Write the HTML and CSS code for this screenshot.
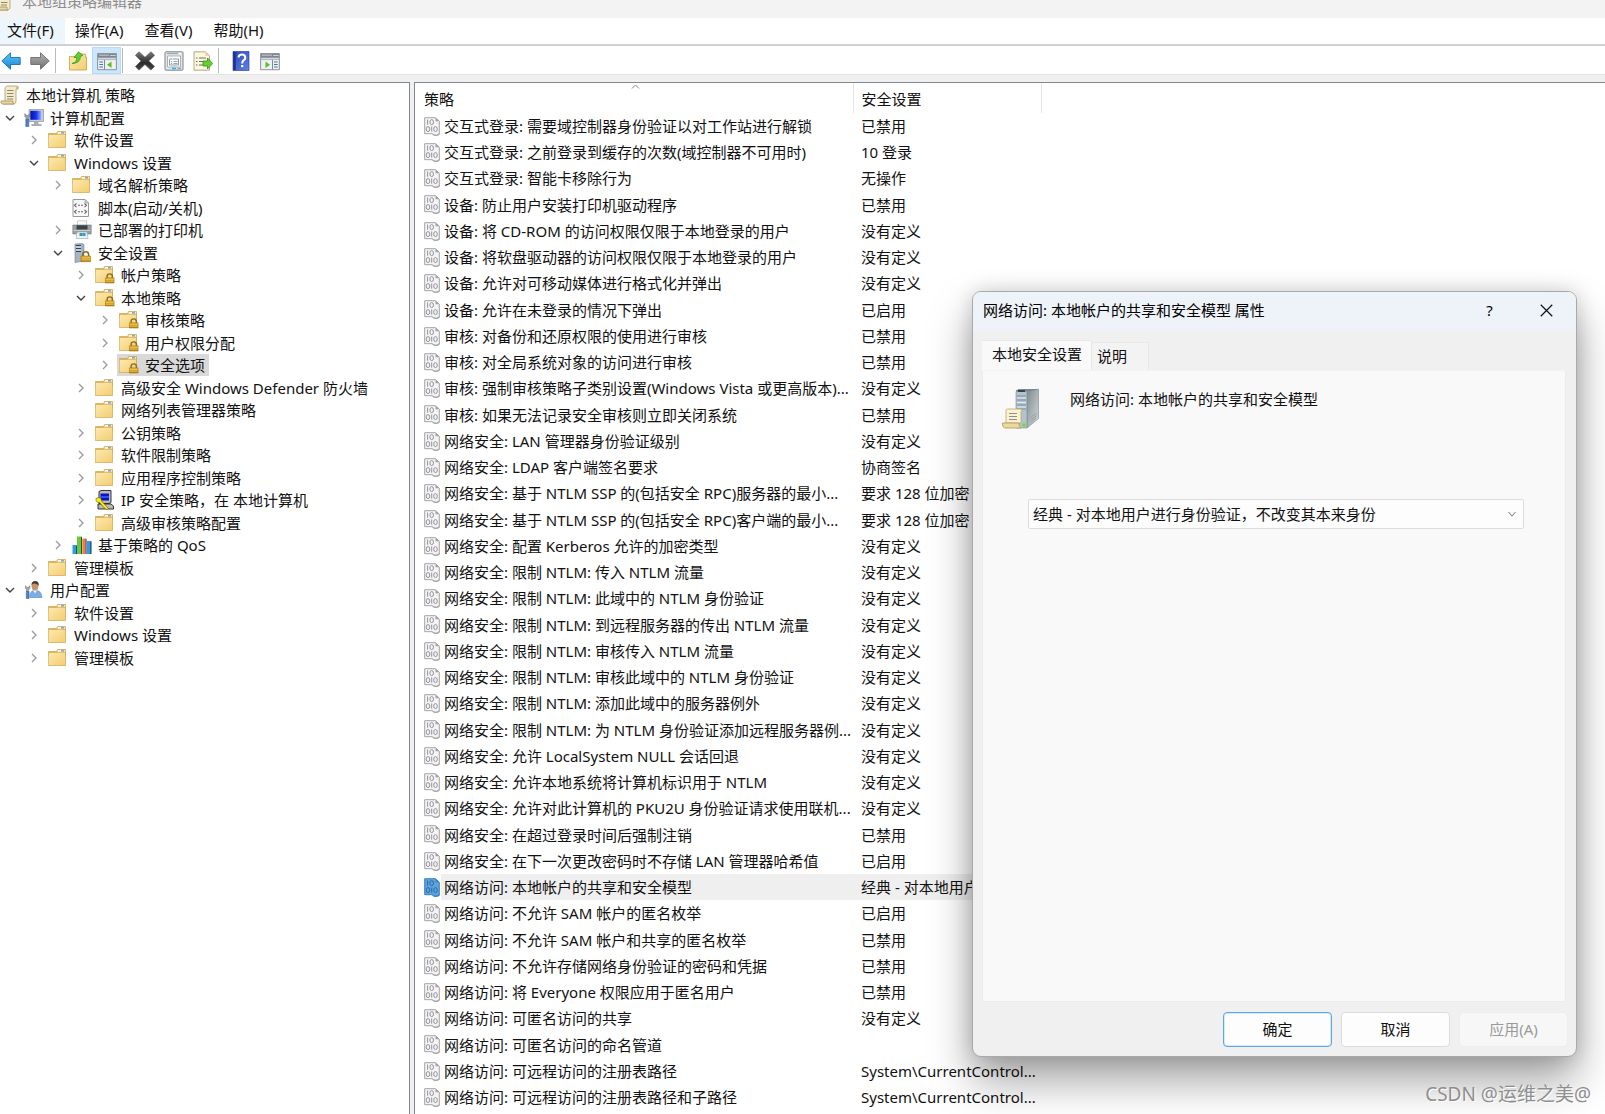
FILE: index.html
```html
<!DOCTYPE html>
<html lang="zh-CN">
<head>
<meta charset="utf-8">
<meta name="viewport" content="width=device-width, initial-scale=1">
<title>本地组策略编辑器</title>
<link rel="stylesheet" href="styles.css">
</head>
<body>
<svg class="sprite" aria-hidden="true">
  <defs>
    <linearGradient id="g-folder" x1="0" y1="0" x2="1" y2="1"><stop offset="0" stop-color="#fdeab0"/><stop offset="1" stop-color="#f3cd72"/></linearGradient>
    <linearGradient id="g-blue" x1="0" y1="0" x2="0" y2="1"><stop offset="0" stop-color="#5cc8fb"/><stop offset="1" stop-color="#1583d6"/></linearGradient>
    <linearGradient id="g-grey" x1="0" y1="0" x2="0" y2="1"><stop offset="0" stop-color="#b5b5b5"/><stop offset="1" stop-color="#6d6d6d"/></linearGradient>
    <linearGradient id="g-dark" x1="0" y1="0" x2="0" y2="1"><stop offset="0" stop-color="#7a7a7a"/><stop offset=".6" stop-color="#2b2b2b"/><stop offset="1" stop-color="#4a4a4a"/></linearGradient>
    <linearGradient id="g-help" x1="0" y1="0" x2="1" y2="1"><stop offset="0" stop-color="#2b45b4"/><stop offset="1" stop-color="#5f83e6"/></linearGradient>
    <linearGradient id="g-lock" x1="0" y1="0" x2="0" y2="1"><stop offset="0" stop-color="#e9b93a"/><stop offset="1" stop-color="#b97d08"/></linearGradient>
    <linearGradient id="g-side" x1="0" y1="0" x2="1" y2="1"><stop offset="0" stop-color="#7f8b8d"/><stop offset="1" stop-color="#d3dadb"/></linearGradient>
    <linearGradient id="g-screen" x1="0" y1="0" x2="1" y2="0"><stop offset="0" stop-color="#0510a8"/><stop offset=".55" stop-color="#1a35ee"/><stop offset="1" stop-color="#8fb0ff"/></linearGradient>
  </defs>
  <symbol id="i-closed" viewBox="0 0 10 10"><path d="M3 1l4 4-4 4" fill="none" stroke="#9a9a9a" stroke-width="1.3"/></symbol>
  <symbol id="i-open" viewBox="0 0 10 10"><path d="M1 3l4 4 4-4" fill="none" stroke="#404040" stroke-width="1.4"/></symbol>
  <symbol id="i-scroll" viewBox="0 0 20 20">
    <path d="M5 2.500Q6 1 8 1h9.500q1.500 1 .5 3h-2v12q0 2.500-2 3H3V17H5z" fill="#f4ebc8" stroke="#a99a6c" stroke-width=".8"/>
    <path d="M1 16h12q-.5 2 1 3H2.500Q.5 18.500 1 16z" fill="#ead9a0" stroke="#a08f5c" stroke-width=".8"/>
    <path d="M16 4V2.500Q16.500 1 18 2v2z" fill="#cdb983"/>
    <path d="M7 5.500h6.500M7 8.500h6.500M7 11.500h6.500M7 14h6" stroke="#8b8878" stroke-width="1"/>
  </symbol>
  <symbol id="i-folder" viewBox="1 0 20 20">
    <path d="M1.500 3.500h8l1-2h8V8h-17z" fill="#ecc569" stroke="#cba24c" stroke-width=".7"/>
    <path d="M10.800 2h7v2h-7z" fill="#fff6d6"/><path d="M14 2.200h3v1.300h-3z" fill="#4b9fe6"/>
    <path d="M1.300 4.500h8.200l1-.2h8v13.200H1.300z" fill="url(#g-folder)" stroke="#d0a54e" stroke-width=".7"/>
  </symbol>
  <symbol id="i-padlock" viewBox="0 0 12 12">
    <path d="M3 6V3.800Q3 1 6 1t3 2.800V6" fill="none" stroke="#8e6b1c" stroke-width="1.700"/>
    <path d="M1 5.500h10V11.500H1z" fill="url(#g-lock)" stroke="#8d6207" stroke-width=".5"/><path d="M1.500 7.500h9M1.500 9.500h9" stroke="#f7da7c" stroke-width=".6"/>
  </symbol>
  <symbol id="i-locked" viewBox="0 0 20 20"><use href="#i-folder" x="0" y="0" width="20" height="20"/><use href="#i-padlock" x="9.500" y="7.500" width="10.500" height="11.500"/></symbol>
  <symbol id="i-computer" viewBox="0 0 20 20">
    <path d="M5 1.500h14.500v12H5z" fill="#c9ccd2" stroke="#8d929b" stroke-width=".7"/><path d="M6.300 2.800h10.900v9H6.300z" fill="url(#g-screen)"/>
    <path d="M10 13.500h4.500V16h3v2h-10v-2H10z" fill="#a9aeb5"/>
    <path d="M.8 5.500v3l1.200 1v2h2.400v-2l1.300-1v-3l-1.300 1.800H2.200z" fill="#9aa2ab" stroke="#65707a" stroke-width=".5"/><path d="M1.800 11.500h3v7h-3z" fill="#4f82c8" stroke="#28538f" stroke-width=".5"/>
  </symbol>
  <symbol id="i-user" viewBox="0 0 20 20">
    <path d="M6 17.500Q5.500 10.500 11 10.200q6.500 0 7 7.300z" fill="#79aee3" stroke="#5588bd" stroke-width=".6"/><path d="M9 10l2 3.500L13.200 10z" fill="#eef4fa"/>
    <ellipse cx="11" cy="6.300" rx="3.300" ry="4.300" fill="#c79468"/><path d="M7.500 5.500Q7.200 1 11.200 1t3.500 5q-1.500-2.500-4-2.500t-3.200 2z" fill="#4a3c33"/>
    <path d="M1.500 5.500v3l1 1v2h2.200v-2l1.200-1v-3L4.700 7.300H2.500z" fill="#a2a8af" stroke="#68727b" stroke-width=".5"/><path d="M2.300 11.500h2.800v7H2.300z" fill="#4f82c8" stroke="#28538f" stroke-width=".5"/>
  </symbol>
  <symbol id="i-script" viewBox="1 0 20 20">
    <path d="M2 1.500h12l3.500 3.500v13.500H2z" fill="#f8f8f8" stroke="#989898" stroke-width="1"/><path d="M14 1.500V5h3.500z" fill="#cfcfcf" stroke="#989898" stroke-width=".6"/>
    <path d="M5.500 5.500l-2 1.800 2 1.800M13.500 5.500l2 1.800-2 1.800M7 7.300h2M10 7.300h2M5.500 12l-2 1.800 2 1.800M13.500 12l2 1.800-2 1.800M7 13.800h2M10 13.800h2" fill="none" stroke="#666" stroke-width="1.100"/>
  </symbol>
  <symbol id="i-printer" viewBox="0 0 20 20">
    <path d="M5.500.8h9v5h-9z" fill="#fafafa" stroke="#a8adb0" stroke-width=".6"/><path d="M.8 5h18.400v9H.8z" fill="#9a9fa4" stroke="#73797e" stroke-width=".6"/>
    <path d="M4.500 5.300h11v4.200h-11z" fill="#3d4246"/><path d="M1.500 10.500h17" stroke="#c8cccf"/><path d="M5 12h10l1 6.500H4z" fill="#e8f1f6" stroke="#9ba7ae" stroke-width=".6"/><path d="M7.500 13h3v3h-3z" fill="#2aa38f"/><path d="M10.500 13h3v3h-3z" fill="#3c96d8"/>
  </symbol>
  <symbol id="i-secserver" viewBox="0 0 20 20">
    <path d="M3 1l7-.5 2 1V18l-9 1.500z" fill="#a4b4c3" stroke="#74838f" stroke-width=".6"/><path d="M4 2.500h5M4 5.500h5M4 8.500h5" stroke="#36424c" stroke-width="1.200"/><path d="M4 4h5M4 7h5" stroke="#dfe8ee" stroke-width="1"/>
    <use href="#i-padlock" x="8" y="7.500" width="11.500" height="12"/>
  </symbol>
  <symbol id="i-ipsec" viewBox="0 0 20 20">
    <path d="M4 1.500l2-1h10v12l-2 1H4z" fill="#b9b9b9" stroke="#222" stroke-width=".9"/><path d="M5.500 3.500h8.500v7H5.500z" fill="#0713c9"/><path d="M5.500 7h8.500" stroke="#3f63ff" stroke-width="1.500"/>
    <path d="M3 14h13l2.500 2v3H3z" fill="#b9b9b9" stroke="#222" stroke-width=".9"/>
    <path d="M1 8.500Q3.500 6.500 6 8.500l.5 2.500 7 7.500-2 1-2-1.500-5-5.500Q.5 12.500 1 8.500z" fill="#fbf000" stroke="#5e5900" stroke-width=".6"/>
  </symbol>
  <symbol id="i-qos" viewBox="1 0 20 20">
    <path d="M1.500 10h3.500v9H1.500z" fill="#2e9ce6"/><path d="M5 10l.9.500v8.500H5z" fill="#063a63"/><path d="M6 1.500h4V19H6z" fill="#6cc644"/><path d="M10 1.500l1 .5v17h-1z" fill="#1c5e0f"/>
    <path d="M11.300 3.500h3.200V19h-3.200z" fill="#f47c4c"/><path d="M14.500 3.500l1 .5v15h-1z" fill="#5c1d08"/><path d="M15.700 6h3.500V19h-3.500z" fill="#2e9ce6"/><path d="M19.200 6l1.300.5V19h-1.300z" fill="#063a63"/>
  </symbol>
  <symbol id="i-policy" viewBox="0 0 16 19">
    <path class="sheet" d="M.7.700h10.800l3.800 3.500v13l-2.300 1H10l-2-1.500H.7z"/><path class="fold" d="M11.500.7v3.500h3.800z"/>
    <g class="bits"><path d="M3.600 2.500v5.200M7.700 9.500v5.200"/><ellipse cx="7.700" cy="5.100" rx="1.800" ry="2.500"/><ellipse cx="4" cy="12.100" rx="1.800" ry="2.500"/><ellipse cx="11.500" cy="12.100" rx="1.800" ry="2.500"/></g>
    <path class="curl" d="M7.500 16l3 1.700h2.500l2.300-1.700v2L13 18.800h-3z"/>
  </symbol>
  <symbol id="i-back" viewBox="0 0 20 20"><path d="M.8 10L9.500 1.800v4.700h9.700v7H9.500v4.700z" fill="url(#g-blue)" stroke="#1c6eb0" stroke-width=".9"/></symbol>
  <symbol id="i-forward" viewBox="0 0 20 20"><path d="M19.200 10L10.500 1.800v4.700H.8v7h9.700v4.700z" fill="url(#g-grey)" stroke="#6b6b6b" stroke-width=".9"/></symbol>
  <symbol id="i-up" viewBox="0 0 20 20">
    <path d="M1.500 5.500h7l1-2.500h8v3h1v13h-17z" fill="url(#g-folder)" stroke="#c99e45" stroke-width=".8"/>
    <path d="M4 12.500Q9 11.500 8.800 6.500H6L10.500.8 15 4.500l-2.600.8Q12.500 12.500 4 12.500z" fill="#5fd12c" stroke="#2f8f12" stroke-width=".7"/>
  </symbol>
  <symbol id="i-window" viewBox="0 0 20 20">
    <path d="M.6 2.500h18.800v16.200H.6z" fill="#eef0f3" stroke="#85898f" stroke-width=".9"/><path d="M1 3h18v3.800H1z" fill="#7f8792"/><path d="M2 4.200h10" stroke="#b9c0c9" stroke-width="1.200"/><path d="M13.500 4.500h1.200M15.500 4.500h1.200M17.400 4.500h1" stroke="#fff" stroke-width="1.200"/><path d="M1 8.300h18" stroke="#b4b9c0" stroke-width="1.500"/>
  </symbol>
  <symbol id="i-tree" viewBox="0 0 20 20"><use href="#i-window" width="20" height="20"/><path d="M7.500 9v9.500" stroke="#85898f"/><path d="M2.300 11h3.700M2.300 13.500h3.700M2.300 16h3.700" stroke="#3f79b8" stroke-width="1.200"/><path d="M14.500 10.500v6.500l-4.500-3.200z" fill="#4fc321"/></symbol>
  <symbol id="i-action" viewBox="0 0 20 20"><use href="#i-window" width="20" height="20"/><path d="M12.500 9v9.500" stroke="#85898f"/><path d="M14 11h3.700M14 13.500h3.700M14 16h3.700" stroke="#3f79b8" stroke-width="1.200"/><path d="M5.500 10.500v6.500l4.500-3.200z" fill="#4fc321"/></symbol>
  <symbol id="i-delete" viewBox="0 0 20 20"><path d="M4 .8l6 5.500 6-5.500 3.600 3.500-5.800 5.600 5.800 5.500-3.700 3.700-6-5.500L4 19.200.4 15.600 6 10 .4 4.300z" fill="url(#g-dark)" stroke="#555" stroke-width=".6"/></symbol>
  <symbol id="i-props" viewBox="0 0 20 20">
    <rect x="1" y=".8" width="18" height="18.400" rx="1" fill="#e3e7ec" stroke="#7e8389"/><path d="M3 2.500h11" stroke="#a0a7af" stroke-width="1.300"/><path d="M15 2.500h2.500" stroke="#fff" stroke-width="1.300"/>
    <path d="M3.500 5h13v11h-13z" fill="#fff" stroke="#9aa1a9" stroke-width=".8"/><path d="M5.500 8h3M5.500 8.500v5.500h9V8H9" fill="none" stroke="#8d96a1"/><path d="M7 10.500h1.200M9.500 10.500h4M7 12.500h1.200M9.500 12.500h4" stroke="#7888a0" stroke-width=".8"/><path d="M8 17.500h4" stroke="#1fbdf0" stroke-width="1.600"/><path d="M13.500 17.500h3.500" stroke="#909aa3" stroke-width="1.300"/>
  </symbol>
  <symbol id="i-export" viewBox="0 0 20 20">
    <path d="M1 .8h11.500l4 4v14.400H1z" fill="#fbf6dc" stroke="#aaa37d" stroke-width=".9"/><path d="M12.500.8v4h4z" fill="#d9d1a5"/><path d="M3 7h1.500M3 10.500h1.500M3 14h1.500M6 7h7M6 10.500h4M6 14h4" stroke="#6c6c74" stroke-width="1.200"/>
    <path d="M10 10h4.500V7l5.200 5.500-5.200 5.500v-3H10z" fill="#63d030" stroke="#319414" stroke-width=".8"/>
  </symbol>
  <symbol id="i-help" viewBox="0 0 20 20"><path d="M2 .5h16v19H2z" fill="url(#g-help)" stroke="#20348c" stroke-width=".6"/><path d="M2.300 1h2.500v18H2.300z" fill="#1d3190"/><path d="M7.500 6.500Q7.800 3.500 11 3.500t3.300 3.200q0 1.500-1.800 2.700-1.300 1-1.300 3" fill="none" stroke="#fff" stroke-width="2"/><path d="M10.100 14h2.200v2.200h-2.200z" fill="#fff"/></symbol>
  <symbol id="i-server" viewBox="0 0 40 42">
    <path d="M15 2.500L18 1h19.500v29.500L26 40H15z" fill="#9db0bb"/><path d="M26 4L37.500 1v29.500L26 40z" fill="url(#g-side)" stroke="#7f8b8d" stroke-width=".5"/><path d="M15 2.500L18 1h19.500L26 4H15z" fill="#7a8b90"/>
    <path d="M15 3.500h11V40H15z" fill="#b3c2cc" stroke="#7b8b95" stroke-width=".6"/><path d="M17 3h7" stroke="#37414a" stroke-width="2"/><path d="M16 8h9M16 12h9M16 17h9M16 21h9" stroke="#7c8f9d" stroke-width="1.200"/><path d="M16 10h9M16 14.500h9M16 19h9" stroke="#e5edf2" stroke-width="1.200"/>
    <path d="M30 29l6-4M30 31.500l6-4M30 34l5-4" stroke="#8d999b" stroke-width=".8"/>
    <path d="M5 22.500Q5 21 7 21h13q1.500 1 0 3v11H5z" fill="#fbf2d0" stroke="#bca66a" stroke-width=".8"/><path d="M1.500 35H18q-.5 3.500 2 5H3.500Q1 38.500 1.500 35z" fill="#ecd9a0" stroke="#b09858" stroke-width=".8"/><path d="M8 25.500h8M8 28.500h8M8 31.500h8" stroke="#8f8b98" stroke-width="1.200"/>
    <circle cx="23" cy="37" r="1.800" fill="#6be21c"/>
  </symbol>
  <symbol id="i-close" viewBox="0 0 14 14"><path d="M.8.8l12.400 12.400M13.200.8L.8 13.200" stroke="#111" stroke-width="1.300"/></symbol>
</svg>

<header class="titlebar"><svg class="ico"><use href="#i-scroll"/></svg><span>本地组策略编辑器</span></header>
<nav class="menubar" aria-label="菜单">
  <button class="menu active">文件(F)</button><button class="menu">操作(A)</button><button class="menu">查看(V)</button><button class="menu">帮助(H)</button>
</nav>
<div class="toolbar" role="toolbar">
  <button class="tool" aria-label="后退"><svg class="ico"><use href="#i-back"/></svg></button>
  <button class="tool" aria-label="前进"><svg class="ico"><use href="#i-forward"/></svg></button>
  <span class="sep"></span>
  <button class="tool" aria-label="上移"><svg class="ico"><use href="#i-up"/></svg></button>
  <button class="tool pressed" aria-label="控制台树"><svg class="ico"><use href="#i-tree"/></svg></button>
  <span class="sep"></span>
  <button class="tool" aria-label="删除"><svg class="ico"><use href="#i-delete"/></svg></button>
  <button class="tool" aria-label="属性"><svg class="ico"><use href="#i-props"/></svg></button>
  <button class="tool" aria-label="导出列表"><svg class="ico"><use href="#i-export"/></svg></button>
  <span class="sep"></span>
  <button class="tool" aria-label="帮助"><svg class="ico"><use href="#i-help"/></svg></button>
  <button class="tool" aria-label="操作窗格"><svg class="ico"><use href="#i-action"/></svg></button>
</div>

<main class="panes">
  <ul class="tree" role="tree">
    <li class="node root"><span class="item"><svg class="ico"><use href="#i-scroll"/></svg>本地计算机 策略</span></li>
    <li class="node l1"><svg class="chev"><use href="#i-open"/></svg><span class="item"><svg class="ico"><use href="#i-computer"/></svg>计算机配置</span></li>
    <li class="node l2"><svg class="chev"><use href="#i-closed"/></svg><span class="item"><svg class="ico"><use href="#i-folder"/></svg>软件设置</span></li>
    <li class="node l2"><svg class="chev"><use href="#i-open"/></svg><span class="item"><svg class="ico"><use href="#i-folder"/></svg>Windows 设置</span></li>
    <li class="node l3"><svg class="chev"><use href="#i-closed"/></svg><span class="item"><svg class="ico"><use href="#i-folder"/></svg>域名解析策略</span></li>
    <li class="node l3"><svg class="chev"></svg><span class="item"><svg class="ico"><use href="#i-script"/></svg>脚本(启动/关机)</span></li>
    <li class="node l3"><svg class="chev"><use href="#i-closed"/></svg><span class="item"><svg class="ico"><use href="#i-printer"/></svg>已部署的打印机</span></li>
    <li class="node l3"><svg class="chev"><use href="#i-open"/></svg><span class="item"><svg class="ico"><use href="#i-secserver"/></svg>安全设置</span></li>
    <li class="node l4"><svg class="chev"><use href="#i-closed"/></svg><span class="item"><svg class="ico"><use href="#i-locked"/></svg>帐户策略</span></li>
    <li class="node l4"><svg class="chev"><use href="#i-open"/></svg><span class="item"><svg class="ico"><use href="#i-locked"/></svg>本地策略</span></li>
    <li class="node l5"><svg class="chev"><use href="#i-closed"/></svg><span class="item"><svg class="ico"><use href="#i-locked"/></svg>审核策略</span></li>
    <li class="node l5"><svg class="chev"><use href="#i-closed"/></svg><span class="item"><svg class="ico"><use href="#i-locked"/></svg>用户权限分配</span></li>
    <li class="node l5"><svg class="chev"><use href="#i-closed"/></svg><span class="item selected"><svg class="ico"><use href="#i-locked"/></svg>安全选项</span></li>
    <li class="node l4"><svg class="chev"><use href="#i-closed"/></svg><span class="item"><svg class="ico"><use href="#i-folder"/></svg>高级安全 Windows Defender 防火墙</span></li>
    <li class="node l4"><svg class="chev"></svg><span class="item"><svg class="ico"><use href="#i-folder"/></svg>网络列表管理器策略</span></li>
    <li class="node l4"><svg class="chev"><use href="#i-closed"/></svg><span class="item"><svg class="ico"><use href="#i-folder"/></svg>公钥策略</span></li>
    <li class="node l4"><svg class="chev"><use href="#i-closed"/></svg><span class="item"><svg class="ico"><use href="#i-folder"/></svg>软件限制策略</span></li>
    <li class="node l4"><svg class="chev"><use href="#i-closed"/></svg><span class="item"><svg class="ico"><use href="#i-folder"/></svg>应用程序控制策略</span></li>
    <li class="node l4"><svg class="chev"><use href="#i-closed"/></svg><span class="item"><svg class="ico"><use href="#i-ipsec"/></svg>IP 安全策略，在 本地计算机</span></li>
    <li class="node l4"><svg class="chev"><use href="#i-closed"/></svg><span class="item"><svg class="ico"><use href="#i-folder"/></svg>高级审核策略配置</span></li>
    <li class="node l3"><svg class="chev"><use href="#i-closed"/></svg><span class="item"><svg class="ico"><use href="#i-qos"/></svg>基于策略的 QoS</span></li>
    <li class="node l2"><svg class="chev"><use href="#i-closed"/></svg><span class="item"><svg class="ico"><use href="#i-folder"/></svg>管理模板</span></li>
    <li class="node l1"><svg class="chev"><use href="#i-open"/></svg><span class="item"><svg class="ico"><use href="#i-user"/></svg>用户配置</span></li>
    <li class="node l2"><svg class="chev"><use href="#i-closed"/></svg><span class="item"><svg class="ico"><use href="#i-folder"/></svg>软件设置</span></li>
    <li class="node l2"><svg class="chev"><use href="#i-closed"/></svg><span class="item"><svg class="ico"><use href="#i-folder"/></svg>Windows 设置</span></li>
    <li class="node l2"><svg class="chev"><use href="#i-closed"/></svg><span class="item"><svg class="ico"><use href="#i-folder"/></svg>管理模板</span></li>
  </ul>

  <section class="list">
    <table class="policies">
      <colgroup><col class="c-icon"><col class="c-name"><col class="c-setting"><col></colgroup>
      <thead><tr><th colspan="2" class="h-name">策略<svg class="sort"><path d="M1 4.500l3.500-3.500L8 4.500" fill="none" stroke="#888"/></svg></th><th class="h-setting">安全设置</th><th></th></tr></thead>
      <tbody>
        <tr><td><svg class="pol"><use href="#i-policy"/></svg></td><td>交互式登录: 需要域控制器身份验证以对工作站进行解锁</td><td>已禁用</td><td></td></tr>
        <tr><td><svg class="pol"><use href="#i-policy"/></svg></td><td>交互式登录: 之前登录到缓存的次数(域控制器不可用时)</td><td>10 登录</td><td></td></tr>
        <tr><td><svg class="pol"><use href="#i-policy"/></svg></td><td>交互式登录: 智能卡移除行为</td><td>无操作</td><td></td></tr>
        <tr><td><svg class="pol"><use href="#i-policy"/></svg></td><td>设备: 防止用户安装打印机驱动程序</td><td>已禁用</td><td></td></tr>
        <tr><td><svg class="pol"><use href="#i-policy"/></svg></td><td>设备: 将 CD-ROM 的访问权限仅限于本地登录的用户</td><td>没有定义</td><td></td></tr>
        <tr><td><svg class="pol"><use href="#i-policy"/></svg></td><td>设备: 将软盘驱动器的访问权限仅限于本地登录的用户</td><td>没有定义</td><td></td></tr>
        <tr><td><svg class="pol"><use href="#i-policy"/></svg></td><td>设备: 允许对可移动媒体进行格式化并弹出</td><td>没有定义</td><td></td></tr>
        <tr><td><svg class="pol"><use href="#i-policy"/></svg></td><td>设备: 允许在未登录的情况下弹出</td><td>已启用</td><td></td></tr>
        <tr><td><svg class="pol"><use href="#i-policy"/></svg></td><td>审核: 对备份和还原权限的使用进行审核</td><td>已禁用</td><td></td></tr>
        <tr><td><svg class="pol"><use href="#i-policy"/></svg></td><td>审核: 对全局系统对象的访问进行审核</td><td>已禁用</td><td></td></tr>
        <tr><td><svg class="pol"><use href="#i-policy"/></svg></td><td>审核: 强制审核策略子类别设置(Windows Vista 或更高版本)...</td><td>没有定义</td><td></td></tr>
        <tr><td><svg class="pol"><use href="#i-policy"/></svg></td><td>审核: 如果无法记录安全审核则立即关闭系统</td><td>已禁用</td><td></td></tr>
        <tr><td><svg class="pol"><use href="#i-policy"/></svg></td><td>网络安全: LAN 管理器身份验证级别</td><td>没有定义</td><td></td></tr>
        <tr><td><svg class="pol"><use href="#i-policy"/></svg></td><td>网络安全: LDAP 客户端签名要求</td><td>协商签名</td><td></td></tr>
        <tr><td><svg class="pol"><use href="#i-policy"/></svg></td><td>网络安全: 基于 NTLM SSP 的(包括安全 RPC)服务器的最小...</td><td>要求 128 位加密</td><td></td></tr>
        <tr><td><svg class="pol"><use href="#i-policy"/></svg></td><td>网络安全: 基于 NTLM SSP 的(包括安全 RPC)客户端的最小...</td><td>要求 128 位加密</td><td></td></tr>
        <tr><td><svg class="pol"><use href="#i-policy"/></svg></td><td>网络安全: 配置 Kerberos 允许的加密类型</td><td>没有定义</td><td></td></tr>
        <tr><td><svg class="pol"><use href="#i-policy"/></svg></td><td>网络安全: 限制 NTLM: 传入 NTLM 流量</td><td>没有定义</td><td></td></tr>
        <tr><td><svg class="pol"><use href="#i-policy"/></svg></td><td>网络安全: 限制 NTLM: 此域中的 NTLM 身份验证</td><td>没有定义</td><td></td></tr>
        <tr><td><svg class="pol"><use href="#i-policy"/></svg></td><td>网络安全: 限制 NTLM: 到远程服务器的传出 NTLM 流量</td><td>没有定义</td><td></td></tr>
        <tr><td><svg class="pol"><use href="#i-policy"/></svg></td><td>网络安全: 限制 NTLM: 审核传入 NTLM 流量</td><td>没有定义</td><td></td></tr>
        <tr><td><svg class="pol"><use href="#i-policy"/></svg></td><td>网络安全: 限制 NTLM: 审核此域中的 NTLM 身份验证</td><td>没有定义</td><td></td></tr>
        <tr><td><svg class="pol"><use href="#i-policy"/></svg></td><td>网络安全: 限制 NTLM: 添加此域中的服务器例外</td><td>没有定义</td><td></td></tr>
        <tr><td><svg class="pol"><use href="#i-policy"/></svg></td><td>网络安全: 限制 NTLM: 为 NTLM 身份验证添加远程服务器例...</td><td>没有定义</td><td></td></tr>
        <tr><td><svg class="pol"><use href="#i-policy"/></svg></td><td>网络安全: 允许 LocalSystem NULL 会话回退</td><td>没有定义</td><td></td></tr>
        <tr><td><svg class="pol"><use href="#i-policy"/></svg></td><td>网络安全: 允许本地系统将计算机标识用于 NTLM</td><td>没有定义</td><td></td></tr>
        <tr><td><svg class="pol"><use href="#i-policy"/></svg></td><td>网络安全: 允许对此计算机的 PKU2U 身份验证请求使用联机...</td><td>没有定义</td><td></td></tr>
        <tr><td><svg class="pol"><use href="#i-policy"/></svg></td><td>网络安全: 在超过登录时间后强制注销</td><td>已禁用</td><td></td></tr>
        <tr><td><svg class="pol"><use href="#i-policy"/></svg></td><td>网络安全: 在下一次更改密码时不存储 LAN 管理器哈希值</td><td>已启用</td><td></td></tr>
        <tr class="selected"><td><svg class="pol"><use href="#i-policy"/></svg></td><td>网络访问: 本地帐户的共享和安全模型</td><td>经典 - 对本地用户进行身...</td><td></td></tr>
        <tr><td><svg class="pol"><use href="#i-policy"/></svg></td><td>网络访问: 不允许 SAM 帐户的匿名枚举</td><td>已启用</td><td></td></tr>
        <tr><td><svg class="pol"><use href="#i-policy"/></svg></td><td>网络访问: 不允许 SAM 帐户和共享的匿名枚举</td><td>已禁用</td><td></td></tr>
        <tr><td><svg class="pol"><use href="#i-policy"/></svg></td><td>网络访问: 不允许存储网络身份验证的密码和凭据</td><td>已禁用</td><td></td></tr>
        <tr><td><svg class="pol"><use href="#i-policy"/></svg></td><td>网络访问: 将 Everyone 权限应用于匿名用户</td><td>已禁用</td><td></td></tr>
        <tr><td><svg class="pol"><use href="#i-policy"/></svg></td><td>网络访问: 可匿名访问的共享</td><td>没有定义</td><td></td></tr>
        <tr><td><svg class="pol"><use href="#i-policy"/></svg></td><td>网络访问: 可匿名访问的命名管道</td><td></td><td></td></tr>
        <tr><td><svg class="pol"><use href="#i-policy"/></svg></td><td>网络访问: 可远程访问的注册表路径</td><td>System\CurrentControl...</td><td></td></tr>
        <tr><td><svg class="pol"><use href="#i-policy"/></svg></td><td>网络访问: 可远程访问的注册表路径和子路径</td><td>System\CurrentControl...</td><td></td></tr>
      </tbody>
    </table>
  </section>
</main>

<section class="dialog" role="dialog" aria-labelledby="dialog-title">
  <header class="dialog-head">
    <h1 id="dialog-title">网络访问: 本地帐户的共享和安全模型 属性</h1>
    <button class="caption" aria-label="帮助">?</button>
    <button class="caption" aria-label="关闭"><svg class="close"><use href="#i-close"/></svg></button>
  </header>
  <div class="tabs" role="tablist"><button class="tab current" role="tab" aria-selected="true">本地安全设置</button><button class="tab" role="tab">说明</button></div>
  <div class="page" role="tabpanel">
    <div class="subject"><svg class="server"><use href="#i-server"/></svg><label for="model">网络访问: 本地帐户的共享和安全模型</label></div>
    <div class="combo">
      <select id="model"><option>经典 - 对本地用户进行身份验证，不改变其本来身份</option></select>
      <svg class="drop" viewBox="0 0 10 10"><path d="M1.500 3l3.500 4 3.500-4" fill="none" stroke="#8a8a8a" stroke-width="1.100"/></svg>
    </div>
  </div>
  <footer class="actions"><button class="btn primary">确定</button><button class="btn">取消</button><button class="btn" disabled>应用(A)</button></footer>
</section>

<div class="watermark">CSDN @运维之美@</div>
</body>
</html>
```

FILE: styles.css
```css
* { box-sizing: border-box; }

body {
  margin: 0;
  min-height: 100vh;
  position: relative;
  display: flex;
  flex-direction: column;
  overflow: hidden;
  background: #f0f0f0;
  color: #111;
  font: 15px/22px "Noto Sans", "Noto Sans CJK SC", sans-serif;
}

button, select { font: inherit; color: inherit; margin: 0; padding: 0; border: 0; background: none; }
svg { display: block; flex: none; }
.sprite { position: absolute; width: 0; height: 0; }
.ico { width: 20px; height: 20px; }

.titlebar {
  display: flex;
  align-items: center;
  gap: 2px;
  height: 32px;
  margin-top: -14px;
  padding-bottom: 2px;
  background: #f3f3f3;
  color: #8c8c8c;
}
.titlebar .ico { margin-left: -6px; margin-right: 6px; }

.menubar { display: flex; height: 28px; background: #fff; border-bottom: 2px solid #cfd1d5; }
.menu { padding: 0 11px 2px 10px; }
.menu.active { padding-left: 7px; background: #eef6fd; }

.toolbar { display: flex; height: 29px; margin-bottom: 7px; padding-top: 1px; background: #fff; border-bottom: 1px solid #e4e4e4; }
.toolbar .tool:first-child { margin-left: -4px; }
.tool { width: 29px; display: flex; align-items: center; justify-content: center; }
.tool.pressed { background: #cce6fc; border: 1px solid #b5dafa; }
.sep { width: 1px; margin: 1px 7px 1px 1px; background: #b9b9b9; }

/* Two panes */
.panes { flex: 1; display: flex; gap: 4px; }
.tree {
  width: 410px;
  flex: none;
  margin: 0;
  padding: 1px 0 0;
  list-style: none;
  display: grid;
  grid-auto-rows: 22px 23px;
  align-content: start;
  background: #fff;
  border: solid #828790;
  border-width: 1px 1px 0 0;
}
.node { display: flex; align-items: center; white-space: nowrap; }
.chev { width: 10px; height: 10px; margin: 0 7px 0 5px; }
.item { display: flex; align-items: center; gap: 6px; height: 100%; padding: 0 4px 0 2px; }
.root .item { padding-left: 0; }
.item.selected { background: #d9d9d9; }
.l2 { padding-left: 24px; }
.l3 { padding-left: 48px; }
.l4 { padding-left: 71px; }
.l5 { padding-left: 95px; }

.list { flex: 1; min-width: 0; background: #fff; border: solid #828790; border-width: 1px 0 0 1px; }
.policies { width: 100%; table-layout: fixed; border-collapse: collapse; }
.c-icon { width: 26px; }
.c-name { width: 412px; }
.c-setting { width: 188px; }
.policies th { position: relative; height: 30px; padding: 1px 8px 0; font-weight: 400; text-align: left; }
.policies .h-name { padding-left: 9px; }
.h-name, .h-setting { border-right: 1px solid #e5e5e5; }
.sort { position: absolute; top: 1px; left: 216px; width: 9px; height: 6px; }
.policies td { height: 26px; padding: 0 0 0 3px; white-space: nowrap; overflow: hidden; }
.policies tbody tr:nth-child(4n) td { height: 27px; }
.policies td:first-child { padding-left: 9px; overflow: visible; }
.policies td:nth-child(3) { padding-left: 8px; }
.selected td:nth-child(2), .selected td:nth-child(3) { background: #efefef; }

.pol { width: 16px; height: 19px; --sheet: #f4f4f4; --line: #a3a3a3; --bits: #95929f; }
.selected .pol { --sheet: #5ba3dc; --line: #3c83bd; --bits: #2a6ca6; }
.sheet { fill: var(--sheet); stroke: var(--line); stroke-width: 1; }
.fold, .curl { fill: var(--line); }
.bits { fill: none; stroke: var(--bits); stroke-width: 1; }

/* Floating property sheet */
.dialog {
  position: absolute;
  top: 291px;
  right: 28px;
  width: 605px;
  display: flex;
  flex-direction: column;
  background: #f0f0f0;
  border: 1px solid #a9a9a9;
  border-radius: 9px;
  box-shadow: 0 24px 44px rgba(0, 0, 0, .36), 0 0 20px rgba(0, 0, 0, .16);
}
.dialog-head { display: flex; align-items: center; height: 39px; padding: 0 1px 3px 10px; background: #eef3f9; border-radius: 8px 8px 0 0; color: #000; }
.dialog-head h1 { flex: 1; margin: 0; font-size: 15px; font-weight: 400; }
.caption { width: 57px; height: 36px; display: flex; align-items: center; justify-content: center; }
.close { width: 13px; height: 13px; }

.tabs { display: flex; align-items: flex-end; margin: 9px 0 0 9px; }
.tab { height: 28px; width: 57px; padding: 0 0 2px 5px; text-align: left; background: #f3f3f3; border: solid #e8e8e8; border-width: 1px 1px 0 0; }
.tab.current { height: 30px; width: 110px; padding: 0 0 4px 10px; background: #f9f9f9; }

.page { min-height: 632px; margin: 0 10px 0 9px; padding: 17px 41px 0 18px; background: #f9f9f9; border: 1px solid #ececec; border-top-color: #f3f3f3; }
.subject { display: flex; gap: 29px; }
.server { width: 40px; height: 42px; }
.combo { position: relative; margin: 69px 0 0 27px; }
.combo select { display: block; width: 100%; height: 30px; padding: 0 30px 0 4px; appearance: none; background: #fdfdfd; border: 1px solid #dcdcdc; border-radius: 2px; }
.drop { position: absolute; top: 10px; right: 7px; width: 10px; height: 10px; }

.actions { display: flex; justify-content: flex-end; gap: 9px; padding: 10px 8px 9px; }
.btn { width: 109px; height: 35px; padding-bottom: 1px; background: #fdfdfd; border: 1px solid #dcdcdc; border-radius: 4px; }
.btn.primary { border-color: #5ba7e0; box-shadow: inset 0 0 0 1px #d5e9f8; }
.btn:disabled { background: #f7f7f7; border-color: #ededed; color: #9a9a9a; }

.watermark { position: absolute; right: 14px; bottom: 7px; font-size: 19px; line-height: 26px; color: #8e8e8e; text-shadow: 1px 1px 0 #fff; }
```
